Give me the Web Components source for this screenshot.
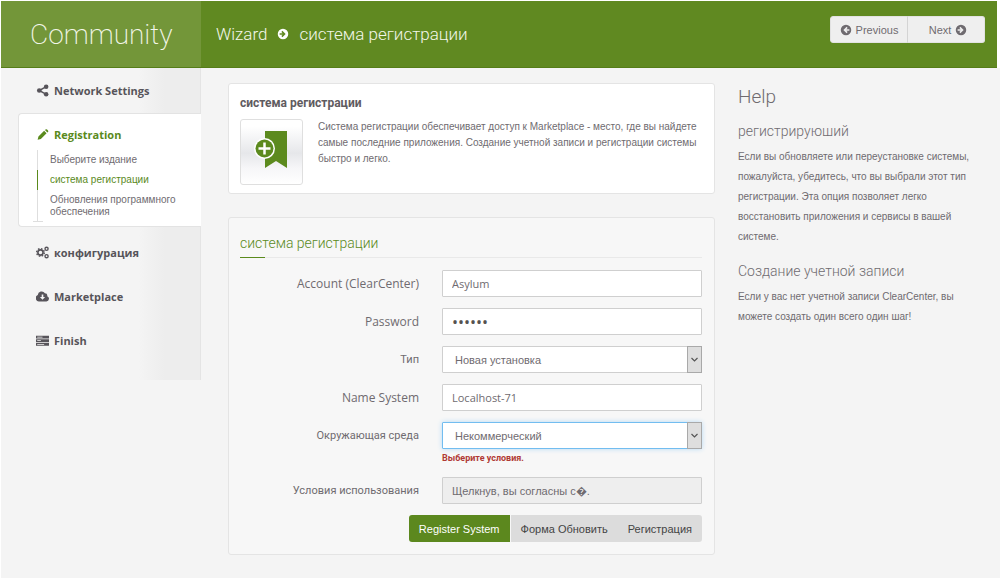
<!DOCTYPE html>
<html lang="ru">
<head>
<meta charset="utf-8">
<meta name="viewport" content="width=device-width, initial-scale=1">
<title>Community - система регистрации</title>
<style>
body{margin:0;padding:1px 0 1px 1px;background:#fff;font-family:Roboto,"Noto Sans",sans-serif;color:#6f6b70;box-sizing:border-box;min-height:100vh;display:flex;flex-direction:column}
app-shell{flex:1}
</style>
</head>
<body>
<app-shell>
  <app-header slot="header" brand="Community" section="Wizard" page="система регистрации"></app-header>
  <side-nav slot="nav">
    <nav-item icon="share" label="Network Settings"></nav-item>
    <nav-item icon="pencil" label="Registration" active>
      <sub-item>Выберите издание</sub-item>
      <sub-item current>система регистрации</sub-item>
      <sub-item>Обновления программного обеспечения</sub-item>
    </nav-item>
    <nav-item icon="cogs" label="конфигурация"></nav-item>
    <nav-item icon="cloud" label="Marketplace"></nav-item>
    <nav-item icon="server" label="Finish"></nav-item>
  </side-nav>
  <intro-card heading="система регистрации">Система регистрации обеспечивает доступ к Marketplace - место, где вы найдете самые последние приложения. Создание учетной записи и регистрации системы быстро и легко.</intro-card>
  <form-panel heading="система регистрации">
    <form-row type="text" label="Account (ClearCenter)" value="Asylum" latin></form-row>
    <form-row type="password" label="Password" value="secret" latin></form-row>
    <form-row type="select" label="Тип" value="Новая установка"></form-row>
    <form-row type="text" label="Name System" value="Localhost-71" latin></form-row>
    <form-row type="select" label="Окружающая среда" value="Некоммерческий" error="Выберите условия." focused></form-row>
    <form-row type="readonly" label="Условия использования" value="Щелкнув, вы согласны с�."></form-row>
  </form-panel>
  <help-panel slot="help">
    <help-topic heading="регистрируюший">Если вы обновляете или переустановке системы, пожалуйста, убедитесь, что вы выбрали этот тип регистрации. Эта опция позволяет легко восстановить приложения и сервисы в вашей системе.</help-topic>
    <help-topic heading="Создание учетной записи">Если у вас нет учетной записи ClearCenter, вы можете создать один всего один шаг!</help-topic>
  </help-panel>
</app-shell>
<script>
const ICONS = {
  share: '<path d="M12 3.500 4 8l8 4.500" fill="none" stroke="currentColor" stroke-width="1.800"/><circle cx="12.500" cy="3.500" r="2.800"/><circle cx="4" cy="8" r="2.800"/><circle cx="12.500" cy="12.500" r="2.800"/>',
  pencil: '<path d="M2 14.500l1-4L10 3.500l3 3-7 7zM11 2.600l.8-.8q.9-.8 1.800 0l1.200 1.200q.8.900 0 1.800l-.8.800z"/>',
  cogs: '<circle cx="5.500" cy="8" r="3.200" fill="none" stroke="currentColor" stroke-width="2"/><circle cx="5.500" cy="8" r="4.700" fill="none" stroke="currentColor" stroke-width="1.800" stroke-dasharray="1.900 1.790"/><circle cx="13" cy="3.500" r="1.900" fill="none" stroke="currentColor" stroke-width="1.700"/><circle cx="13" cy="12.500" r="1.900" fill="none" stroke="currentColor" stroke-width="1.700"/>',
  cloud: '<path fill-rule="evenodd" d="M4 14A4 4 0 0 1 2.200 6.300 4.800 4.800 0 0 1 11 4a3 3 0 0 1 2.800 3.600A3.300 3.300 0 0 1 12.800 14zM7 5.500v3H4.800L8 12l3.200-3.500H9v-3z"/>',
  server: '<path fill-rule="evenodd" d="M0 2h16v3.500H0zM0 6.500h16V10H0zM0 11h16v3.500H0zM1.500 3.300v.9H8v-.9zM1.500 7.800v.9H6v-.9zM1.500 12.300v.9H10v-.9z"/>',
  left: '<path fill-rule="evenodd" d="M8 1a7 7 0 1 0 0 14A7 7 0 0 0 8 1zM8.800 3.800 10.200 5.200 8.500 7H12.500v2H8.500l1.700 1.800-1.400 1.400L4.500 8z"/>',
  right: '<path fill-rule="evenodd" d="M8 1a7 7 0 1 0 0 14A7 7 0 0 0 8 1zM7.200 3.800 5.800 5.200 7.500 7H3.500v2H7.500l-1.700 1.800 1.400 1.400L11.500 8z"/>'
};
const icon = name => `<svg viewBox="0 0 16 16" fill="currentColor" aria-hidden="true">${ICONS[name]}</svg>`;

class Base extends HTMLElement {
  connectedCallback() {
    if (this.shadowRoot) return;
    this.attachShadow({mode: 'open'}).innerHTML =
      `<style>*{box-sizing:border-box}:host{display:block}${this.css()}</style>${this.html()}`;
  }
  attr(n) { return this.getAttribute(n) || ''; }
}

customElements.define('app-shell', class extends Base {
  css() { return `
    :host{background:#f4f4f4}
    .grid{display:grid;grid-template-columns:200px minmax(0,1fr) 263px;align-items:start}
    main{padding:15px 22px 24px 27px;display:flex;flex-direction:column;gap:23px}`; }
  html() { return `<slot name="header"></slot><div class="grid"><slot name="nav"></slot><main><slot></slot></main><slot name="help"></slot></div>`; }
});

customElements.define('app-header', class extends Base {
  css() { return `
    :host{background:#fff;padding-right:3px}
    header{display:flex;height:67px;background:#608921;border-bottom:1px solid #557d18;color:#f3f7ea;font-weight:300}
    .brand{width:200px;padding-left:29px;background:#739639;font-size:28px;line-height:68px;font-weight:200}
    .crumbs{flex:1;display:flex;align-items:center;gap:10px;padding-left:15px;font-size:17px}
    .crumbs svg{width:12px;height:12px;color:#fff}
    .pager{display:flex;margin:15px 12px 0 0;height:27px}
    button{width:78px;border:1px solid #e2e2e2;background:#efefef;color:#6f6b70;font:11px "Liberation Sans",sans-serif;display:flex;align-items:center;justify-content:center;gap:4px;padding:0;border-radius:3px 0 0 3px}
    button+button{border-radius:0 3px 3px 0;border-left:1px solid #d4d4d4;margin-left:-1px;padding-left:4px}
    button svg{width:12px;height:12px}`; }
  html() { return `<header><div class="brand">${this.attr('brand')}</div>
    <div class="crumbs"><span>${this.attr('section')}</span>${icon('right')}<span>${this.attr('page')}</span></div>
    <div class="pager"><button type="button">${icon('left')}Previous</button><button type="button">Next${icon('right')}</button></div></header>`; }
});

customElements.define('side-nav', class extends Base {
  css() { return `nav{padding:1px 0 17px 17px;border-right:1px solid #e4e4e4;background:linear-gradient(to right,#f4f4f4 69%,#ededed 82%)}`; }
  html() { return `<nav><slot></slot></nav>`; }
});

customElements.define('nav-item', class extends Base {
  css() { return `
    a{display:flex;align-items:center;gap:5px;height:44px;padding:0 0 2px 18px;color:#57545a;text-decoration:none;font:700 11px "Open Sans","Noto Sans",sans-serif}
    svg{width:13px;height:13px}
    :host([active]){background:#fff;border:1px solid #e3e3e3;border-right:0;border-radius:4px 0 0 4px;margin:0 -1px 4px 0;padding:6px 0 4px}
    :host([active]) a{height:30px;padding-left:17px;color:#5a8a1c}
    .subs{margin-left:18px;border-left:1px solid #dedede;position:relative}
    .subs:after{content:"";position:absolute;left:-5px;bottom:0;width:10px;border-bottom:1px solid #dedede}`; }
  html() { return `<a href="#">${icon(this.attr('icon'))}<span>${this.attr('label')}</span></a>${this.hasAttribute('active') ? '<div class="subs"><slot></slot></div>' : ''}`; }
});

customElements.define('sub-item', class extends Base {
  css() { return `
    a{display:block;padding:4px 16px 4px 12px;margin-left:-1px;border-left:1px solid transparent;font-family:"Liberation Sans",sans-serif;font-size:10px;line-height:12px;color:#6f6b70;text-decoration:none}
    :host([current]) a{color:#5a8a1c;border-color:#5a8a1c}`; }
  html() { return `<a href="#"><slot></slot></a>`; }
});

customElements.define('intro-card', class extends Base {
  css() { return `
    section{background:#fff;border:1px solid #e4e4e4;border-radius:3px;padding:12px 8px 8px 11px}
    h2{margin:0 0 8px;font-size:12px;line-height:15px;font-weight:700;color:#5f5b60}
    .row{display:flex;gap:15px}
    .tile{flex:none;width:63px;height:66px;border:1px solid #dfdfdf;border-radius:3px;background:linear-gradient(#fff 10%,#e6e7ea 52%,#f6f6f8 75%,#fff);display:flex}
    .tile svg{width:61px;height:64px}
    p{margin:0;font-family:"Liberation Sans",sans-serif;font-size:10px;line-height:16px}`; }
  html() { return `<section><h2>${this.attr('heading')}</h2><div class="row"><div class="tile">
    <svg viewBox="0 0 61 64" aria-hidden="true"><path d="M24 11h22v37l-11-7-11 7z" fill="#5c8a1e"/><circle cx="23.500" cy="28.500" r="10.500" fill="#fff"/><circle cx="23.500" cy="28.500" r="9" fill="#5c8a1e"/><path d="M23.500 22.500v12M17.500 28.500h12" stroke="#fff" stroke-width="2.500"/></svg>
    </div><p><slot></slot></p></div></section>`; }
});

customElements.define('form-panel', class extends Base {
  css() { return `
    section{background:#f7f7f7;border:1px solid #e4e4e4;border-radius:3px;padding:11px 12px 12px 11px}
    h2{margin:0 0 12px;font-size:14px;line-height:28px;font-weight:300;color:#5a8a1c;border-bottom:1px solid #e9e9e9;position:relative}
    h2:after{content:"";position:absolute;left:0;bottom:-1px;width:25px;border-bottom:1px solid #5a8a1c}
    form{display:flex;flex-direction:column;gap:11px}
    .actions{display:flex;justify-content:flex-end}
    button{height:27px;border:0;padding:0 10px;background:#dcdcdc;color:#444;font:11px "Liberation Sans",sans-serif}
    button.main{background:#5c881e;color:#fff;border-radius:3px 0 0 3px;margin-right:1px}
    button:last-child{border-radius:0 3px 3px 0}`; }
  html() { return `<section><h2>${this.attr('heading')}</h2><form><slot></slot><div class="actions">
    <button type="button" class="main">Register System</button><button type="reset">Форма Обновить</button><button type="button">Регистрация</button></div></form></section>`; }
});

customElements.define('form-row', class extends Base {
  css() { return `
    .row{display:grid;grid-template-columns:minmax(0,1fr) 260px;column-gap:23px;font-size:11px}
    label{text-align:right;line-height:27px}
    :host([latin]) .row{font-family:"Open Sans","Noto Sans",sans-serif;font-size:12px}
    input,select{width:100%;height:27px;border:1px solid #cfcfcf;border-radius:1px;background:#fff;padding:0 9px;font:inherit;font-size:11px;color:#6f6b70;display:block;outline:0}
    select,input[readonly]{font-family:"Liberation Sans",sans-serif}
    input[readonly]{background:#eee}
    input[type=password]{color:#55524f;font-size:16px}
    select{appearance:none;padding:0 24px 0 12px}
    .pick{position:relative}
    .pick svg{position:absolute;right:0;top:0;width:15px;height:27px;background:#dedede;border:1px solid #a9a9a9;pointer-events:none}
    :host([focused]) select{border-color:#72bdf0;box-shadow:0 0 5px #b5d9f5}
    p{margin:0;padding-top:1px;font-size:9px;line-height:16px;font-weight:700;color:#b03a35;grid-column:2}`; }
  html() {
    const t = this.attr('type'), v = this.attr('value'), e = this.attr('error');
    const field = t === 'select'
      ? `<div class="pick"><select id="f"><option>${v}</option></select><svg viewBox="0 0 13 25" fill="none" stroke="#555" stroke-width="1.200" aria-hidden="true"><path d="M3.500 11l3 3 3-3"/></svg></div>`
      : `<input id="f" type="${t === 'readonly' ? 'text' : t}" value="${v}"${t === 'readonly' ? ' readonly' : ''}>`;
    return `<div class="row"><label for="f">${this.attr('label')}</label>${field}${e ? `<p>${e}</p>` : ''}</div>`;
  }
});

customElements.define('help-panel', class extends Base {
  css() { return `aside{padding:15px 26px 0 1px}h2{margin:0 0 8px;font-size:19px;line-height:28px;font-weight:300}`; }
  html() { return `<aside><h2>Help</h2><slot></slot></aside>`; }
});

customElements.define('help-topic', class extends Base {
  css() { return `h3{margin:0;font-size:14px;line-height:24px;font-weight:300;padding:0 0 4px}p{margin:0 0 12px;font-family:"Liberation Sans",sans-serif;font-size:10px;line-height:20px}`; }
  html() { return `<h3>${this.attr('heading')}</h3><p><slot></slot></p>`; }
});
</script>
</body>
</html>
